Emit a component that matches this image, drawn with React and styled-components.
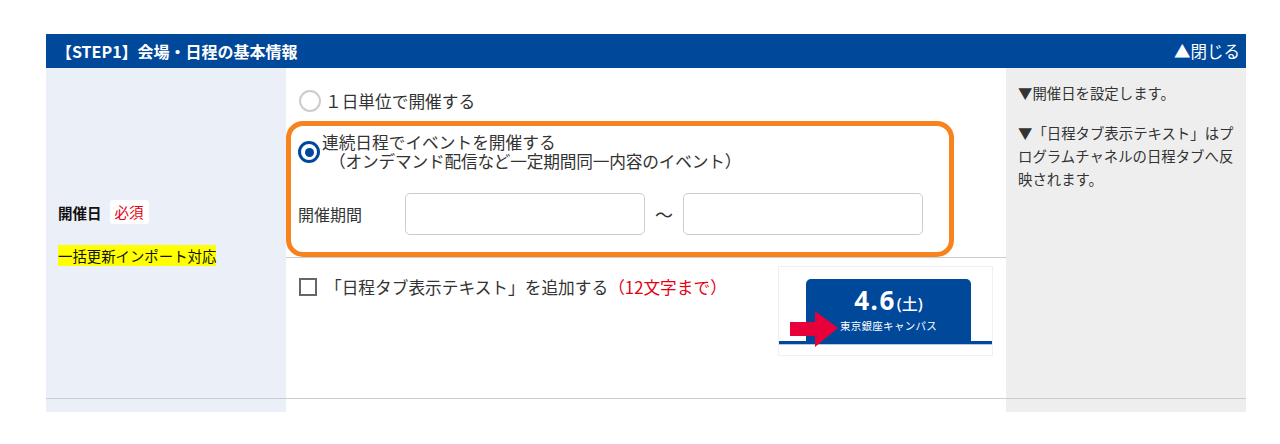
import React from "react";
import styled, { createGlobalStyle } from "styled-components";

/* ---------- global ---------- */

const GlobalStyle = createGlobalStyle`
  body {
    margin: 0;
    background: #fff;
    font-family: "Noto Sans CJK JP", "Noto Sans", sans-serif;
    color: #333;
  }
`;

/* ---------- layout ---------- */

const Page = styled.div`
  padding: 34px 0 0 46px;
`;

const Section = styled.section`
  width: 1200px;
`;

const SectionHeader = styled.div`
  height: 34px;
  background: #00489a;
  color: #fff;
  display: flex;
  align-items: center;
  justify-content: space-between;
  padding: 0 6px 0 10px;
  font-size: 16px;
  font-weight: 700;
`;

const Toggle = styled.span`
  font-weight: 400;
  font-size: 16.5px;
  cursor: pointer;
`;

const Row = styled.div`
  display: grid;
  grid-template-columns: 240px 720px 240px;
  min-height: ${({ $h }) => $h}px;
  border-bottom: ${({ $line }) => ($line ? "1px solid #ccc" : "none")};
`;

const LabelCell = styled.div`
  background: #ebeff7;
  display: flex;
  flex-direction: column;
  justify-content: center;
  padding-left: 12px;
`;

const MainCell = styled.div`
  background: #fff;
`;

const NoteCell = styled.div`
  background: #eeeeee;
  padding: 13px 8px 0 12px;
  font-size: 14.4px;
  line-height: 23px;
`;

/* ---------- left label ---------- */

const LabelLine = styled.div`
  display: flex;
  align-items: center;
  gap: 8px;
`;

const LabelText = styled.span`
  font-size: 14.5px;
  font-weight: 700;
  color: #111;
`;

const Required = styled.span`
  background: #fff;
  color: #e60012;
  font-size: 14.5px;
  height: 24px;
  line-height: 24px;
  padding: 0 5px;
  border-radius: 3px;
`;

const Marker = styled.span`
  align-self: flex-start;
  margin-top: 21px;
  background: #ffff00;
  color: #111;
  font-size: 14.4px;
  line-height: 21px;
`;

/* ---------- radio options ---------- */

const Options = styled.div`
  padding-top: 22px;
  border-bottom: 1px solid #ccc;
`;

const RadioRow = styled.label`
  display: flex;
  align-items: center;
  gap: ${({ $gap }) => $gap}px;
  font-size: 16.7px;
  line-height: 19px;
  padding-left: ${({ $pad }) => $pad || 0}px;
`;

const Radio = styled.span`
  flex: none;
  width: 22px;
  height: 22px;
  box-sizing: border-box;
  border-radius: 50%;
  border: ${({ $on }) => ($on ? "3px solid #00489a" : "2px solid #ccc")};
  display: flex;
  align-items: center;
  justify-content: center;
  &::after {
    content: "";
    display: ${({ $on }) => ($on ? "block" : "none")};
    width: 9px;
    height: 9px;
    border-radius: 50%;
    background: #00489a;
  }
`;

const OptionLines = styled.span`
  display: flex;
  flex-direction: column;
`;

const SubLine = styled.span`
  padding-left: 7px;
  letter-spacing: -0.2px;
`;

const Highlight = styled.div`
  margin-top: 9px;
  width: 668px;
  box-sizing: border-box;
  border: 5px solid #f7831f;
  border-radius: 17px;
  padding: 7px 0 17px 7px;
`;

const PeriodRow = styled.div`
  display: flex;
  align-items: center;
  margin-top: 22px;
  font-size: 16px;
`;

const PeriodLabel = styled.span`
  width: 107px;
`;

const DateInput = styled.input`
  width: 240px;
  height: 42px;
  box-sizing: border-box;
  border: 1px solid #ccc;
  border-radius: 5px;
  background: #fff;
  outline: none;
`;

const Tilde = styled.span`
  width: 38px;
  text-align: center;
  font-size: 18px;
`;

/* ---------- tab text option ---------- */

const TabOption = styled.div`
  display: flex;
  justify-content: space-between;
  padding: 8px 13px 0 13px;
`;

const CheckRow = styled.label`
  display: flex;
  align-items: center;
  gap: 8px;
  margin-top: 12px;
  height: 18px;
  font-size: 16.7px;
`;

const Checkbox = styled.span`
  width: 18px;
  height: 18px;
  box-sizing: border-box;
  border: 2px solid #666;
`;

const Limit = styled.span`
  color: #e60012;
`;

/* tab preview */

const Preview = styled.div`
  position: relative;
  width: 215px;
  height: 90px;
  box-sizing: border-box;
  border: 1px solid #f0f0f0;
  display: flex;
  flex-direction: column;
  padding-top: 12px;
`;

const PreviewTab = styled.div`
  width: 165px;
  height: 62px;
  margin-left: 27px;
  background: #00489a;
  border-radius: 5px 5px 0 0;
  color: #fff;
  display: flex;
  flex-direction: column;
  align-items: center;
  padding-top: 7px;
  box-sizing: border-box;
`;

const TabDate = styled.div`
  font-family: "Noto Sans", "Noto Sans CJK JP", sans-serif;
  font-size: 26px;
  font-weight: 700;
  line-height: 28px;
  letter-spacing: 1.5px;
  small {
    font-size: 16px;
    font-weight: 500;
    letter-spacing: 0;
    margin-left: 1px;
  }
`;

const TabPlace = styled.div`
  font-size: 10.5px;
  line-height: 14px;
  margin-top: 1px;
  letter-spacing: 0.3px;
`;

const TabBase = styled.div`
  width: 100%;
  height: 3px;
  background: #00489a;
  border-bottom: 1px solid #b7c7e2;
`;

const Arrow = styled.svg`
  position: absolute;
  left: 11px;
  top: 44px;
`;

/* ---------- notes ---------- */

const Note = styled.p`
  margin: 0 0 17px;
`;

const App = () => (
  <Page>
    <GlobalStyle />
    <Section>
      <SectionHeader>
        <span>【STEP1】会場・日程の基本情報</span>
        <Toggle>▲閉じる</Toggle>
      </SectionHeader>

      <Row $h={330} $line>
        <LabelCell>
          <LabelLine>
            <LabelText>開催日</LabelText>
            <Required>必須</Required>
          </LabelLine>
          <Marker>一括更新インポート対応</Marker>
        </LabelCell>

        <MainCell>
          <Options>
            <RadioRow $pad={13} $gap={4}>
              <Radio />
              <span>１日単位で開催する</span>
            </RadioRow>
            <Highlight>
              <RadioRow $gap={2}>
                <Radio $on />
                <OptionLines>
                  <span>連続日程でイベントを開催する</span>
                  <SubLine>（オンデマンド配信など一定期間同一内容のイベント）</SubLine>
                </OptionLines>
              </RadioRow>
              <PeriodRow>
                <PeriodLabel>開催期間</PeriodLabel>
                <DateInput />
                <Tilde>〜</Tilde>
                <DateInput />
              </PeriodRow>
            </Highlight>
          </Options>

          <TabOption>
            <CheckRow>
              <Checkbox />
              <span>
                「日程タブ表示テキスト」を追加する<Limit>（12文字まで）</Limit>
              </span>
            </CheckRow>
            <Preview>
              <PreviewTab>
                <TabDate>
                  4.6<small>(土)</small>
                </TabDate>
                <TabPlace>東京銀座キャンパス</TabPlace>
              </PreviewTab>
              <TabBase />
              <Arrow width="48" height="36" viewBox="0 0 48 36">
                <polygon points="0,11 25,11 25,0 48,17 25,36 25,25 0,25" fill="#e8003a" />
              </Arrow>
            </Preview>
          </TabOption>
        </MainCell>

        <NoteCell>
          <Note>▼開催日を設定します。</Note>
          <Note>▼「日程タブ表示テキスト」はプログラムチャネルの日程タブへ反映されます。</Note>
        </NoteCell>
      </Row>

      <Row $h={13}>
        <LabelCell />
        <MainCell />
        <NoteCell />
      </Row>
    </Section>
  </Page>
);

export default App;
